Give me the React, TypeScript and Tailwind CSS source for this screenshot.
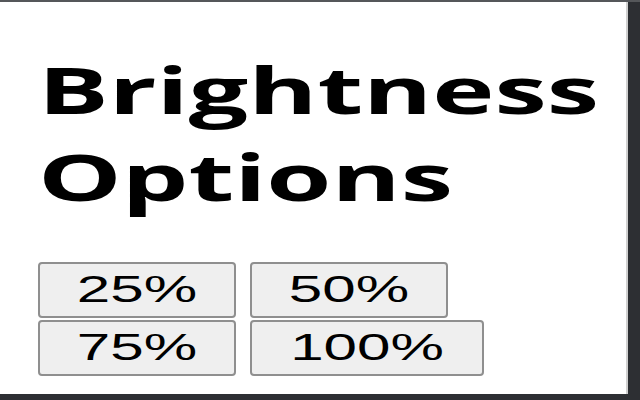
import React from "react";

const levels = [
  { label: "25%", w: "w-[198px]" },
  { label: "50%", w: "w-[198px]" },
  { label: "75%", w: "w-[198px]" },
  { label: "100%", w: "w-[234px]" },
];

function LevelButton({ label, w }: { label: string; w: string }) {
  return (
    <button
      type="button"
      className={`${w} h-[56px] flex items-center justify-center rounded-[4px] border-2 border-[#8f8f8f] bg-[#efefef] text-[36px] leading-none text-black`}
      style={{ fontFamily: '"Liberation Sans", Arial, sans-serif' }}
    >
      <span className="inline-block scale-x-[1.67]">{label}</span>
    </button>
  );
}

export default function App() {
  return (
    <div className="w-[640px] h-[400px] overflow-hidden border-t-2 border-t-[#55575a] bg-[#2d2f33]">
      <div className="w-[628px] h-[392px] border-r-2 border-r-[#cfcfcf] bg-white pl-[38px] pt-[44px]">
        <h1
          className="text-[65px] font-bold leading-[87px] text-black"
          style={{ fontFamily: '"Open Sans", "Noto Sans", sans-serif' }}
        >
          <span className="block">
            <span className="inline-block origin-left scale-x-[1.62]">Brightness</span>
          </span>
          <span className="block">
            <span className="inline-block origin-left scale-x-[1.62]">Options</span>
          </span>
        </h1>
        <div className="mt-[42px] flex flex-col gap-[2px]">
          <div className="flex gap-[14px]">
            <LevelButton {...levels[0]} />
            <LevelButton {...levels[1]} />
          </div>
          <div className="flex gap-[14px]">
            <LevelButton {...levels[2]} />
            <LevelButton {...levels[3]} />
          </div>
        </div>
      </div>
    </div>
  );
}
